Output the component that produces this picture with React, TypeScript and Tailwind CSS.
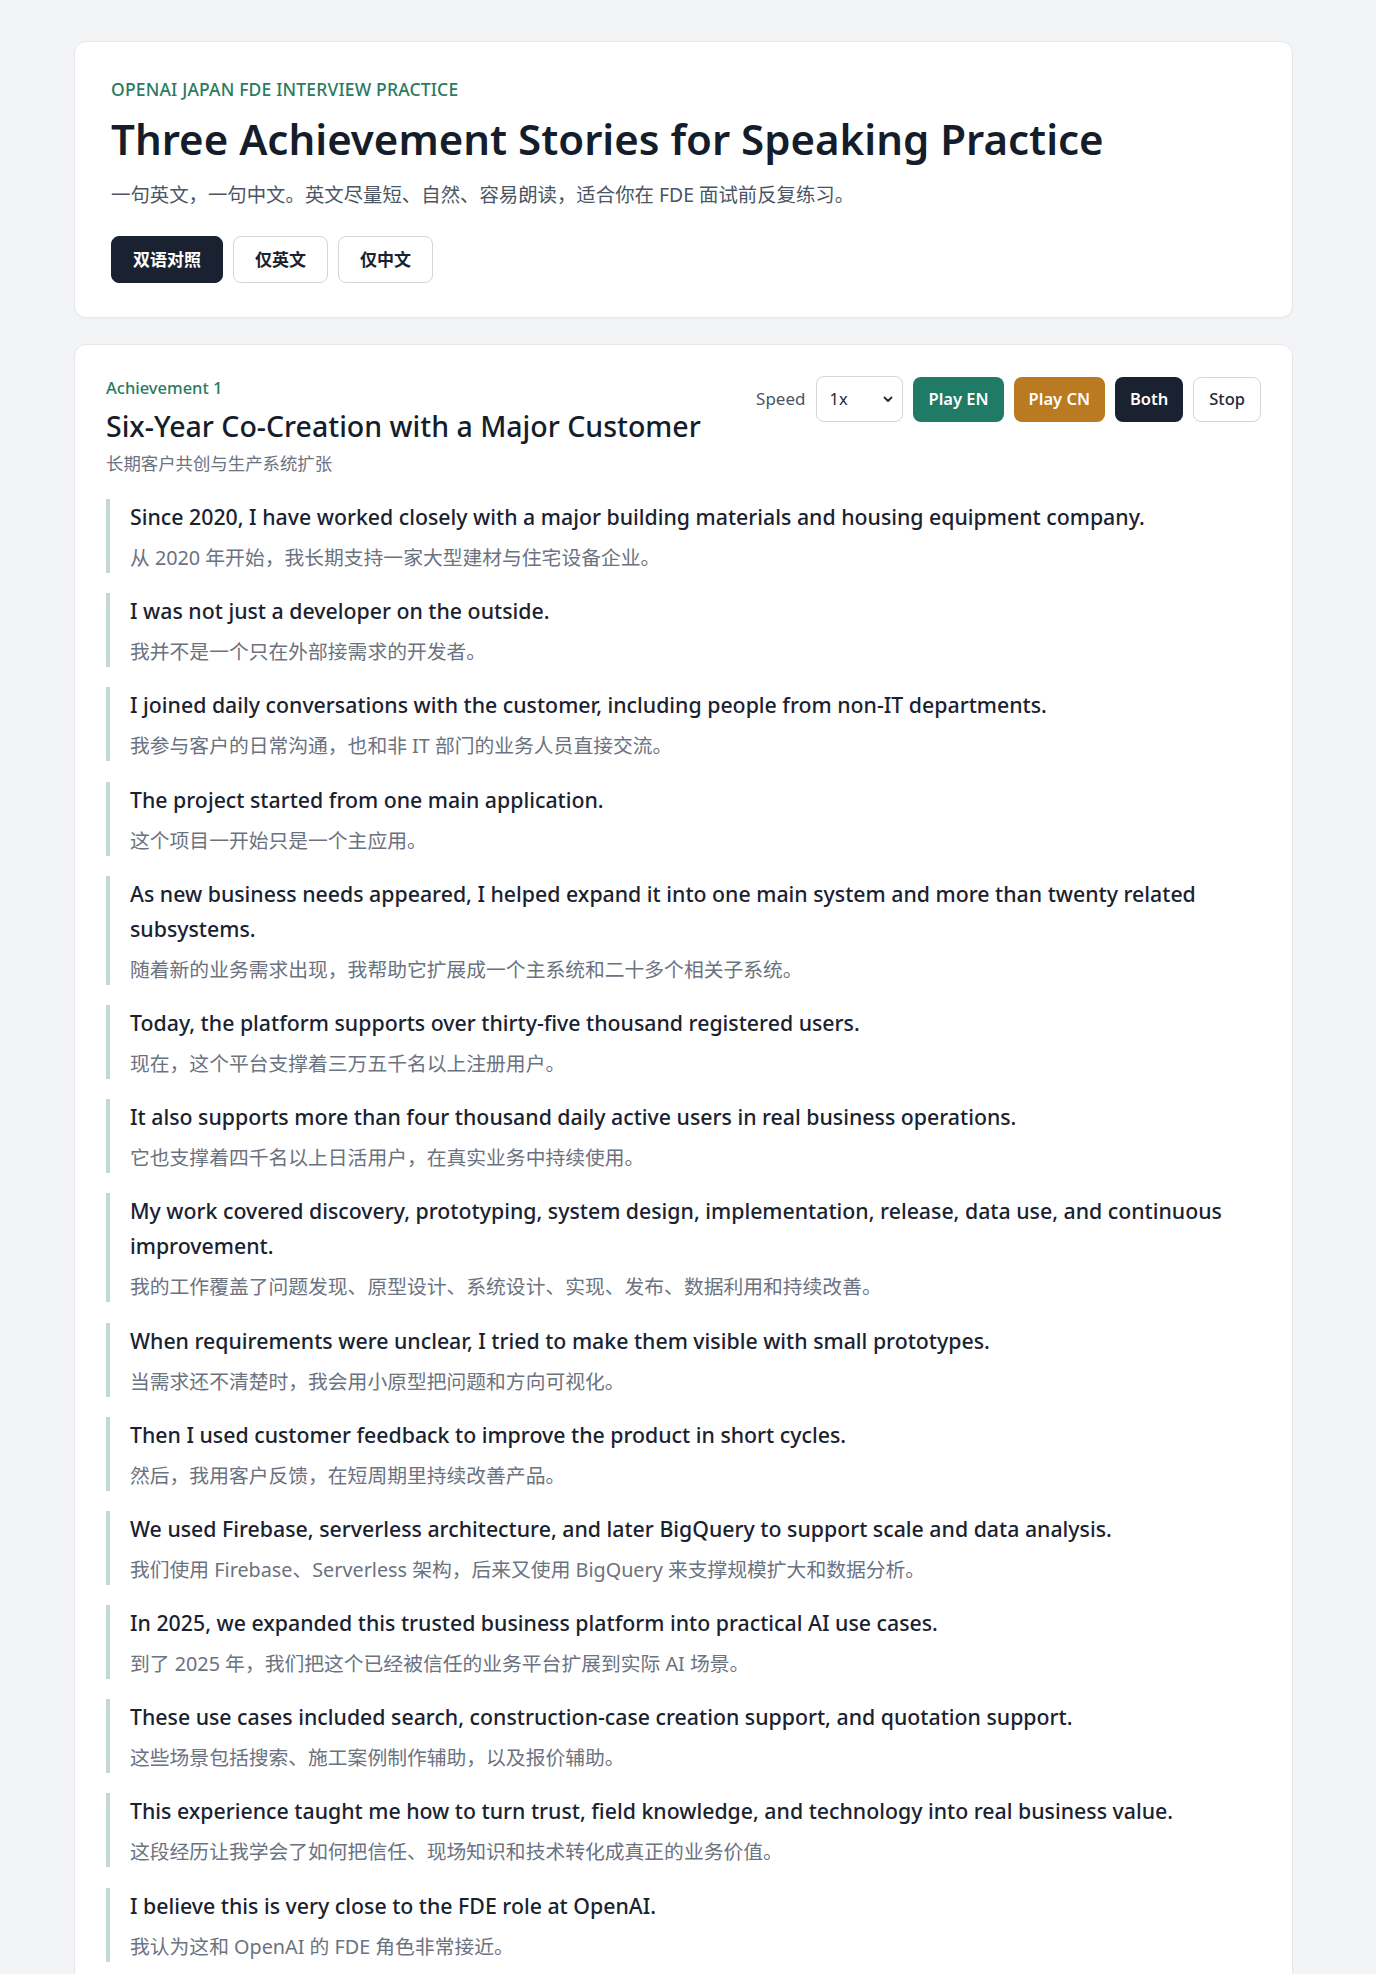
import React, { useState } from "react";

type Line = { en: string; cn: string };

const lines: Line[] = [
  {
    en: "Since 2020, I have worked closely with a major building materials and housing equipment company.",
    cn: "从 2020 年开始，我长期支持一家大型建材与住宅设备企业。",
  },
  { en: "I was not just a developer on the outside.", cn: "我并不是一个只在外部接需求的开发者。" },
  {
    en: "I joined daily conversations with the customer, including people from non-IT departments.",
    cn: "我参与客户的日常沟通，也和非 IT 部门的业务人员直接交流。",
  },
  { en: "The project started from one main application.", cn: "这个项目一开始只是一个主应用。" },
  {
    en: "As new business needs appeared, I helped expand it into one main system and more than twenty related subsystems.",
    cn: "随着新的业务需求出现，我帮助它扩展成一个主系统和二十多个相关子系统。",
  },
  {
    en: "Today, the platform supports over thirty-five thousand registered users.",
    cn: "现在，这个平台支撑着三万五千名以上注册用户。",
  },
  {
    en: "It also supports more than four thousand daily active users in real business operations.",
    cn: "它也支撑着四千名以上日活用户，在真实业务中持续使用。",
  },
  {
    en: "My work covered discovery, prototyping, system design, implementation, release, data use, and continuous improvement.",
    cn: "我的工作覆盖了问题发现、原型设计、系统设计、实现、发布、数据利用和持续改善。",
  },
  {
    en: "When requirements were unclear, I tried to make them visible with small prototypes.",
    cn: "当需求还不清楚时，我会用小原型把问题和方向可视化。",
  },
  {
    en: "Then I used customer feedback to improve the product in short cycles.",
    cn: "然后，我用客户反馈，在短周期里持续改善产品。",
  },
  {
    en: "We used Firebase, serverless architecture, and later BigQuery to support scale and data analysis.",
    cn: "我们使用 Firebase、Serverless 架构，后来又使用 BigQuery 来支撑规模扩大和数据分析。",
  },
  {
    en: "In 2025, we expanded this trusted business platform into practical AI use cases.",
    cn: "到了 2025 年，我们把这个已经被信任的业务平台扩展到实际 AI 场景。",
  },
  {
    en: "These use cases included search, construction-case creation support, and quotation support.",
    cn: "这些场景包括搜索、施工案例制作辅助，以及报价辅助。",
  },
  {
    en: "This experience taught me how to turn trust, field knowledge, and technology into real business value.",
    cn: "这段经历让我学会了如何把信任、现场知识和技术转化成真正的业务价值。",
  },
  { en: "I believe this is very close to the FDE role at OpenAI.", cn: "我认为这和 OpenAI 的 FDE 角色非常接近。" },
];

type Mode = "both" | "en" | "cn";

function ModeButton({
  active,
  label,
  onClick,
}: {
  active: boolean;
  label: string;
  onClick: () => void;
}) {
  return (
    <button
      onClick={onClick}
      className={
        active
          ? "h-[47px] rounded-lg border border-[#1a2130] bg-[#1a2130] px-[21px] text-[17px] font-bold text-white"
          : "h-[47px] rounded-lg border border-gray-300 bg-white px-[21px] text-[17px] font-bold text-[#1a2130]"
      }
    >
      {label}
    </button>
  );
}

export default function App() {
  const [mode, setMode] = useState<Mode>("both");
  const [speed, setSpeed] = useState("1");

  return (
    <div className="min-h-screen bg-[#f3f4f6] pt-[41px] pb-10 font-['Noto_Sans','Noto_Sans_CJK_SC',sans-serif] text-[#1f2937]">
      <div className="ml-[74px] flex w-[1219px] flex-col gap-[26px]">
        <section className="rounded-xl border border-[#e5e7eb] bg-white px-[36px] pt-[35px] pb-[34px] shadow-[0_1px_2px_rgba(0,0,0,0.03)]">
          <p className="text-[17.5px] leading-6 font-medium tracking-[0.01em] text-[#2b7a62] uppercase">
            OpenAI Japan FDE Interview Practice
          </p>
          <h1 className="mt-[10px] text-[42px] leading-[55px] font-semibold text-[#151d2b]">
            Three Achievement Stories for Speaking Practice
          </h1>
          <p className="mt-[15px] text-[19.4px] leading-[28px] text-[#4b5563]">
            一句英文，一句中文。英文尽量短、自然、容易朗读，适合你在 FDE 面试前反复练习。
          </p>
          <div className="mt-[27px] flex gap-[10px]">
            <ModeButton active={mode === "both"} label="双语对照" onClick={() => setMode("both")} />
            <ModeButton active={mode === "en"} label="仅英文" onClick={() => setMode("en")} />
            <ModeButton active={mode === "cn"} label="仅中文" onClick={() => setMode("cn")} />
          </div>
        </section>

        <section className="rounded-xl border border-[#e5e7eb] bg-white px-[31px] pt-[31px] pb-[32px] shadow-[0_1px_2px_rgba(0,0,0,0.03)]">
          <div className="flex items-start justify-between">
            <div>
              <p className="text-[16.5px] leading-6 font-medium text-[#2b7a62]">Achievement 1</p>
              <h2 className="mt-[8px] text-[28.5px] leading-[37px] font-medium text-[#151d2b]">
                Six-Year Co-Creation with a Major Customer
              </h2>
              <p className="mt-[6px] text-[17.4px] leading-6 text-[#6b7280]">长期客户共创与生产系统扩张</p>
            </div>
            <div className="flex items-center gap-[10px]">
              <span className="mr-[1px] text-[17px] text-[#4b5563]">Speed</span>
              <div className="relative">
                <select
                  value={speed}
                  onChange={(e) => setSpeed(e.target.value)}
                  className="h-[46px] w-[87px] appearance-none rounded-lg border border-gray-300 bg-white pl-[12px] text-[16.5px] text-[#1f2937] outline-none"
                >
                  <option value="0.8">0.8x</option>
                  <option value="1">1x</option>
                  <option value="1.2">1.2x</option>
                </select>
                <svg
                  className="pointer-events-none absolute top-1/2 right-[9px] -translate-y-1/2"
                  width="12"
                  height="12"
                  viewBox="0 0 12 12"
                  fill="none"
                >
                  <path d="M2.5 4.5 6 8l3.5-3.5" stroke="#1f2937" strokeWidth="1.8" strokeLinecap="round" strokeLinejoin="round" />
                </svg>
              </div>
              <button className="h-[45px] rounded-lg bg-[#1f7a66] px-[15px] text-[16.5px] font-semibold text-white">
                Play EN
              </button>
              <button className="h-[45px] rounded-lg bg-[#b97a22] px-[15px] text-[16.5px] font-semibold text-white">
                Play CN
              </button>
              <button className="h-[45px] rounded-lg bg-[#1a2130] px-[15px] text-[16.5px] font-semibold text-white">
                Both
              </button>
              <button className="h-[45px] rounded-lg border border-gray-300 bg-white px-[15px] text-[16.5px] font-medium text-[#1f2937]">
                Stop
              </button>
            </div>
          </div>

          <div className="mt-[24px] flex flex-col gap-[20.2px]">
            {lines.map((l, i) => (
              <div key={i} className="border-l-[4px] border-[#c3d9d4] pl-[20px]">
                {mode !== "cn" && (
                  <p className="text-[21.3px] leading-[35px] font-medium text-[#1a2230]">{l.en}</p>
                )}
                {mode !== "en" && (
                  <p className={mode === "both" ? "mt-[8px] text-[19.8px] leading-[31px] text-[#6b7280]" : "text-[19.8px] leading-[31px] text-[#6b7280]"}>
                    {l.cn}
                  </p>
                )}
              </div>
            ))}
          </div>
        </section>
      </div>
    </div>
  );
}
